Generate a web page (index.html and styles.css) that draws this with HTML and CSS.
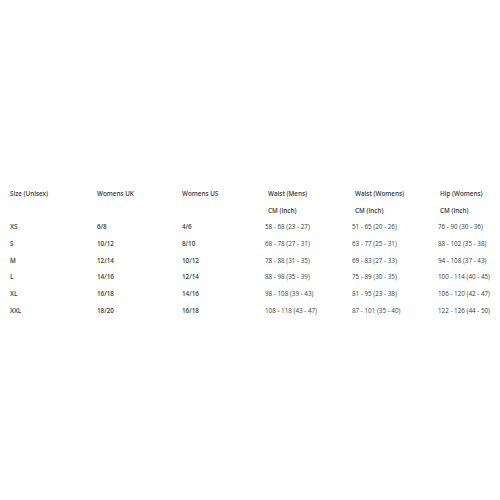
FILE: index.html
```html
<!DOCTYPE html>
<html>
<head>
<meta charset="utf-8">
<link rel="stylesheet" href="styles.css">
</head>
<body>
<div class="page">
<table class="chart">
  <colgroup>
    <col class="c1"><col class="c2"><col class="c3"><col class="c4"><col class="c5"><col class="c6">
  </colgroup>
  <thead>
    <tr>
      <th>Size (Unisex)</th><th>Womens UK</th><th>Womens US</th>
      <th class="hd">Waist (Mens)</th><th class="hd">Waist (Womens)</th><th class="hd hd6">Hip (Womens)</th>
    </tr>
    <tr>
      <th></th><th></th><th></th>
      <th class="hd">CM (Inch)</th><th class="hd">CM (Inch)</th><th class="hd hd6">CM (Inch)</th>
    </tr>
  </thead>
  <tbody>
    <tr><td class="b">XS</td><td class="b">6/8</td><td class="b">4/6</td><td>58 - 68 (23 - 27)</td><td>51 - 65 (20 - 26)</td><td>76 - 90 (30 - 36)</td></tr>
    <tr><td class="b">S</td><td class="b">10/12</td><td class="b">8/10</td><td>68 - 78 (27 - 31)</td><td>63 - 77 (25 - 31)</td><td>88 - 102 (35 - 38)</td></tr>
    <tr><td class="b">M</td><td class="b">12/14</td><td class="b">10/12</td><td>78 - 88 (31 - 35)</td><td>69 - 83 (27 - 33)</td><td>94 - 108 (37 - 43)</td></tr>
    <tr><td class="b">L</td><td class="b">14/16</td><td class="b">12/14</td><td>88 - 98 (35 - 39)</td><td>75 - 89 (30 - 35)</td><td>100 - 114 (40 - 45)</td></tr>
    <tr><td class="b">XL</td><td class="b">16/18</td><td class="b">14/16</td><td>98 - 108 (39 - 43)</td><td>81 - 95 (23 - 38)</td><td>106 - 120 (42 - 47)</td></tr>
    <tr><td class="b">XXL</td><td class="b">18/20</td><td class="b">16/18</td><td>108 - 118 (43 - 47)</td><td>87 - 101 (35 - 40)</td><td>122 - 126 (44 - 50)</td></tr>
  </tbody>
</table>
</div>
</body>
</html>
```

FILE: styles.css
```css
html, body {
  margin: 0;
  padding: 0;
  background: #ffffff;
}
.page {
  padding: 185px 0 0 10px;
  font-family: "Open Sans", "DejaVu Sans", sans-serif;
  color: #353b42;
}
.chart {
  border-collapse: collapse;
  table-layout: fixed;
  width: 490px;
  font-size: 6.3px;
}
.c1 { width: 87px; }
.c2 { width: 85px; }
.c3 { width: 83px; }
.c4 { width: 87px; }
.c5 { width: 86px; }
.c6 { width: 62px; }
.chart th, .chart td {
  padding: 0;
  height: 16.7px;
  text-align: left;
  vertical-align: middle;
  white-space: nowrap;
}
.chart th {
  font-weight: 600;
}
.chart th.plain {
  font-weight: 500;
}
.chart th.hd {
  padding-left: 3px;
}
.chart th.hd6 {
  padding-left: 2px;
}
.chart td {
  font-weight: 400;
}
.chart td.b {
  font-weight: 600;
}
```
